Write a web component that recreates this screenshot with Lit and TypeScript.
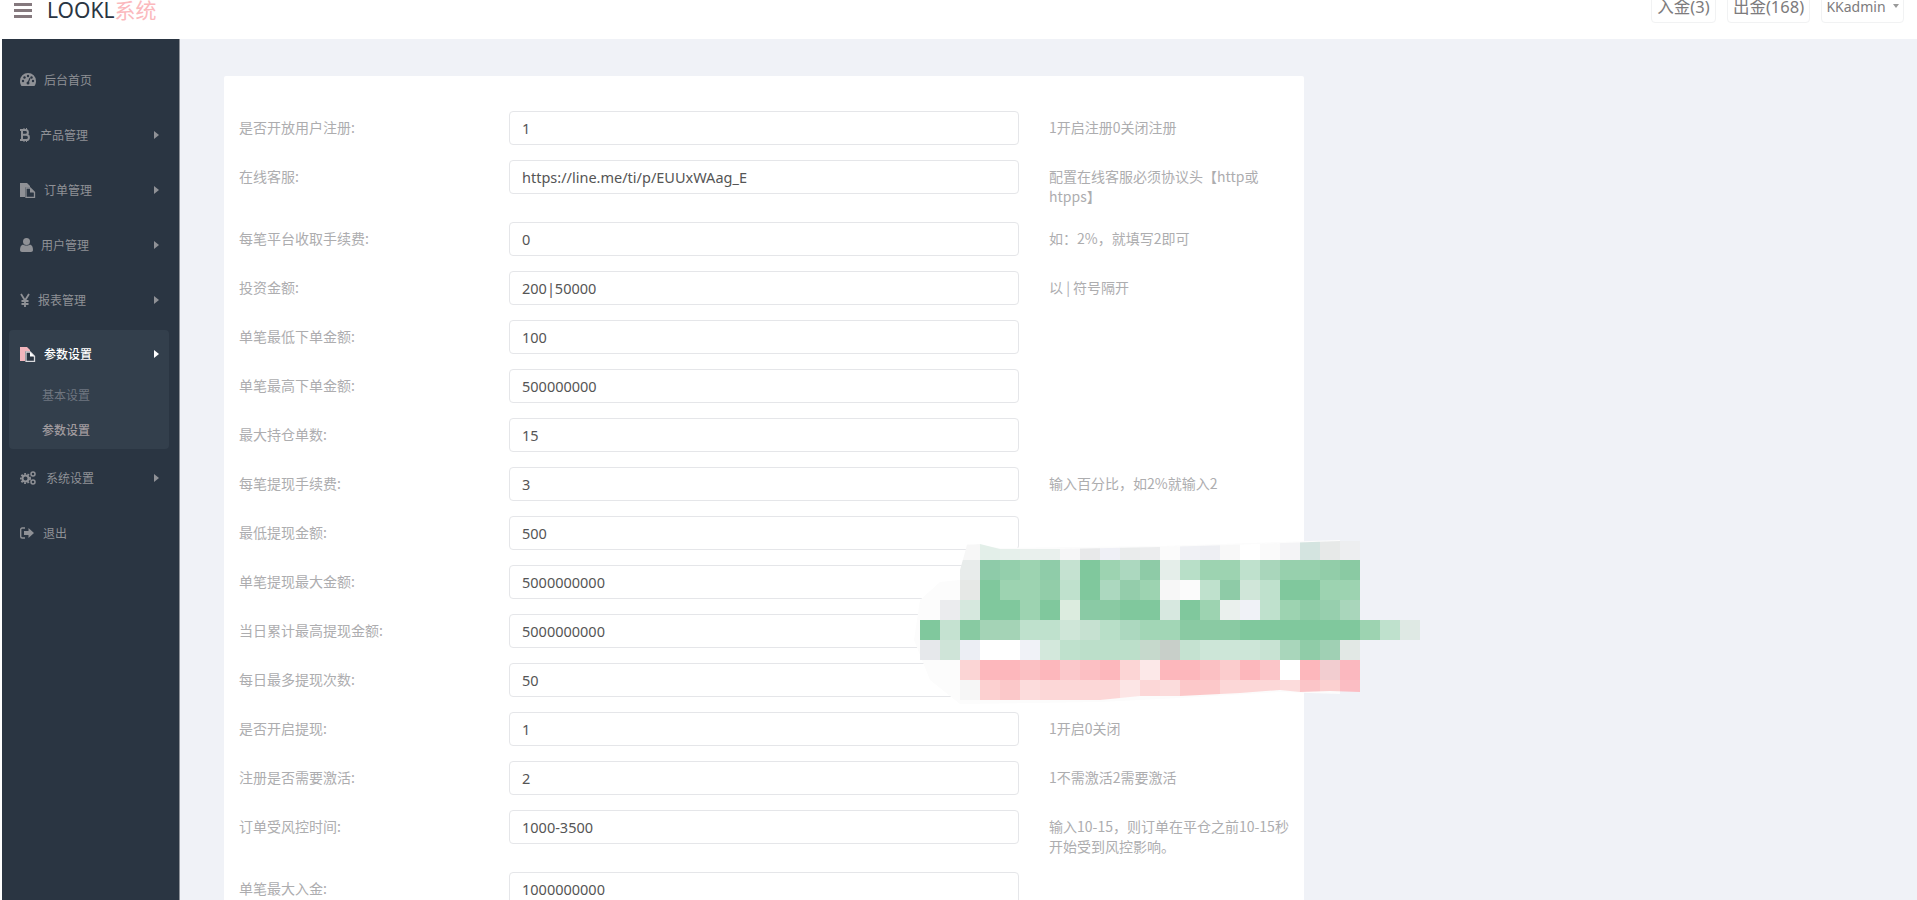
import { LitElement, html, css, svg } from 'lit';
import { customElement } from 'lit/decorators.js';

const icons: Record<string, any> = {
  gauge: svg`<svg width="16" height="13" viewBox="0 0 16 13"><path fill="currentColor" d="M8 0a8 8 0 0 0-8 8c0 1.900.6 3.600 1.500 5h13A8 8 0 0 0 16 8a8 8 0 0 0-8-8z"/><g fill="#2a3542"><circle cx="3" cy="8" r="1.200"/><circle cx="4.500" cy="4.500" r="1.200"/><circle cx="8" cy="3" r="1.200"/><circle cx="13" cy="8" r="1.200"/><circle cx="11.500" cy="4.500" r="1.200"/><circle cx="8" cy="10" r="1.500"/></g><path stroke="#2a3542" stroke-width="1.200" d="M8 10l2-5"/></svg>`,
  btc: svg`<svg width="10" height="14" viewBox="0 0 10 14"><path fill="none" stroke="currentColor" stroke-width="2" d="M0 2h5.500a2.300 2.300 0 0 1 0 4.800H2M2 6.800h4.300a2.400 2.400 0 0 1 0 5.200H0M2 1v12"/><path stroke="currentColor" d="M4 0v2M6.500 0v2M4 12v2M6.500 12v2"/></svg>`,
  files: svg`<svg width="16" height="16" viewBox="0 0 16 16"><path fill="currentColor" d="M0 1h7l3 3v11H0z"/><path fill="#2a3542" d="M5 5.500h5.500l4.500 4.500v6H5z"/><path fill="none" stroke="currentColor" stroke-width="1.300" d="M6 6h4.200l4.300 4.300V15.400H6z"/><path fill="currentColor" d="M10 6l4.500 4.500H10z"/></svg>`,
  filesOn: svg`<svg width="16" height="16" viewBox="0 0 16 16"><path fill="#f3b6bd" d="M0 1h7l3 3v11H0z"/><path fill="#2a3542" d="M5 5.500h5.500l4.500 4.500v6H5z"/><path fill="none" stroke="#d8d8dc" stroke-width="1.300" d="M6 6h4.200l4.300 4.300V15.400H6z"/><path fill="#fff" d="M10 6l4.500 4.500H10z"/></svg>`,
  user: svg`<svg width="13" height="14" viewBox="0 0 13 14"><circle fill="currentColor" cx="6.500" cy="3.500" r="3.500"/><path fill="currentColor" d="M3 6.500c1 1.300 6 1.300 7 0 2 .5 3 2.500 3 5.500 0 1.200-.8 2-2 2H2c-1.200 0-2-.8-2-2 0-3 1-5 3-5.500z"/></svg>`,
  yen: svg`<svg width="10" height="14" viewBox="0 0 10 14"><path fill="none" stroke="currentColor" stroke-width="1.800" d="M1 1l4 6.500L9 1M5 7v7M1.500 8h7M1.500 11h7"/></svg>`,
  cogs: svg`<svg width="16" height="14" viewBox="0 0 16 14"><circle fill="none" stroke="currentColor" stroke-width="2" cx="5.500" cy="7.500" r="3"/><circle fill="none" stroke="currentColor" stroke-width="1.800" stroke-dasharray="1.800 1.500" cx="5.500" cy="7.500" r="4.600"/><circle fill="none" stroke="currentColor" stroke-width="1.500" cx="13" cy="3" r="2"/><circle fill="none" stroke="currentColor" stroke-width="1.500" cx="13" cy="11" r="2"/></svg>`,
  out: svg`<svg width="14" height="12" viewBox="0 0 14 12"><path fill="none" stroke="currentColor" stroke-width="1.400" d="M5 1H2.200C1.300 1 .7 1.700.7 2.500v7c0 .8.6 1.500 1.500 1.500H5"/><path fill="currentColor" d="M4 4h4.500V1L14 6l-5.500 5V8H4z"/></svg>`,
};

// x is where the label starts, the icons have different widths
const navTop = [
  { label: '后台首页', icon: 'gauge', x: 44, arrow: false },
  { label: '产品管理', icon: 'btc', x: 40, arrow: true },
  { label: '订单管理', icon: 'files', x: 44, arrow: true },
  { label: '用户管理', icon: 'user', x: 41, arrow: true },
  { label: '报表管理', icon: 'yen', x: 38, arrow: true },
];
const navBottom = [
  { label: '系统设置', icon: 'cogs', x: 46, arrow: true },
  { label: '退出', icon: 'out', x: 43, arrow: false },
];

const rows = [
  { label: '是否开放用户注册:', value: '1', hint: '1开启注册0关闭注册' },
  { label: '在线客服:', value: 'https://line.me/ti/p/EUUxWAag_E', hint: '配置在线客服必须协议头【http或htpps】' },
  { label: '每笔平台收取手续费:', value: '0', hint: '如：2%，就填写2即可' },
  { label: '投资金额:', value: '200|50000', hint: '以 | 符号隔开' },
  { label: '单笔最低下单金额:', value: '100', hint: '' },
  { label: '单笔最高下单金额:', value: '500000000', hint: '' },
  { label: '最大持仓单数:', value: '15', hint: '' },
  { label: '每笔提现手续费:', value: '3', hint: '输入百分比，如2%就输入2' },
  { label: '最低提现金额:', value: '500', hint: '' },
  { label: '单笔提现最大金额:', value: '5000000000', hint: '' },
  { label: '当日累计最高提现金额:', value: '5000000000', hint: '' },
  { label: '每日最多提现次数:', value: '50', hint: '' },
  { label: '是否开启提现:', value: '1', hint: '1开启0关闭' },
  { label: '注册是否需要激活:', value: '2', hint: '1不需激活2需要激活' },
  { label: '订单受风控时间:', value: '1000-3500', hint: '输入10-15，则订单在平仓之前10-15秒开始受到风控影响。' },
  { label: '单笔最大入金:', value: '1000000000', hint: '' },
];

// the blurred block over the form, one row per 20px, null = nothing drawn
const _ = null;
const mosaic: (string | null)[][] = [
  [_, _, '#f7f7f7', '#e3efe9', '#e6f0eb', '#e9f0ed', '#e9f0ed', '#f6f6f7', '#e8e9ea', '#eff0f6', '#eaecec', '#ecedee', '#fbfbfb', '#f0f1f5', '#eeeff3', '#f8f8f8', '#ffffff', '#fafafa', '#f4f4f6', '#d4e4e0', '#e7e9e8', '#edeef0'],
  [_, _, '#e8eceb', '#8ecba9', '#94cfac', '#9dd3b1', '#8fcca9', '#c5e2d1', '#80c89d', '#9dd3b1', '#acd8bf', '#8ecba7', '#e5eeea', '#b8dfc8', '#9dd3b1', '#9dd3b1', '#bfe1cd', '#a9d6bb', '#97d0ad', '#97d0ad', '#92cda9', '#8acaa3'],
  [_, _, '#e6e8e6', '#80c89d', '#9dd3b1', '#9dd3b1', '#92cda9', '#bfe1cd', '#80c89d', '#acd8bf', '#94cdab', '#9dd3b1', '#f7f7f7', '#fbfbfb', '#bfe1cd', '#8ecba7', '#d0e6d9', '#bfe1cd', '#80c89d', '#80c89d', '#9dd3b1', '#9dd3b1'],
  [_, '#ebecee', '#d6e8de', '#80c89d', '#80c89d', '#9dd3b1', '#80c89d', '#dcecdf', '#8acaa5', '#8acaa3', '#80c89d', '#80c89d', '#d7e8e0', '#80c89d', '#9dd3b1', '#eaf0ed', '#f0f2f7', '#bfe1cd', '#9dd3b1', '#90cca8', '#97cfae', '#a9d6bb'],
  ['#80c89d', '#c5e2d1', '#88caa2', '#a4d3b6', '#a4d3b6', '#bfe1cd', '#bfe1cd', '#cfe6d8', '#c6e1d1', '#b8dfc8', '#acd8bf', '#a2d6b6', '#a2d6b6', '#8acaa3', '#8acaa3', '#8acaa3', '#80c89d', '#80c89d', '#80c89d', '#80c89d', '#80c89d', '#80c89d', '#9dd3b1', '#bfe1cd', '#dfe9e4'],
  ['#e6e8eb', '#cfe4d8', '#eceef4', '#ffffff', '#ffffff', '#f0f2f7', '#d3e8dc', '#bfe1cd', '#bcdfca', '#bcdfca', '#bcdfca', '#c6d9cc', '#c8cfc9', '#c5e2d1', '#cde6d8', '#cde6d8', '#cde6d8', '#c8e3d3', '#a9d6bb', '#90cca8', '#a0d0b4', '#e2e8e5'],
  [_, _, '#fbd5d5', '#fdb7bc', '#fdb7bc', '#fbc0c3', '#fdb7bc', '#fbc8cb', '#fcbfc3', '#fdb7bc', '#fcd5d5', '#fce8e8', '#fdb7bc', '#fdb7bc', '#fbc0c3', '#fbcccd', '#fdb7bc', '#fbc5c8', '#ffffff', '#fdb7bc', '#f2cdd0', '#fbb8bf'],
  [_, _, '#f6f6f6', '#fcd0d0', '#fbc8c9', '#fcdcdc', '#fcd7d7', '#fcd7d7', '#fcd7d7', '#fcd7d7', '#fce5e5', '#fcd7d7', '#fbdcdc', '#fcc8c9', '#fcc8c9', '#fcd7d7', '#fcd7d7', '#fcd7d7', '#fcdcdc', '#fbc5c8', '#fbd0d0', '#fbbdc3'],
];

@customElement('app-root')
export class AppRoot extends LitElement {
  static styles = css`
    :host {
      display: block;
      height: 100vh;
      overflow: hidden;
      position: relative;
      background: #fff;
      font-family: 'Noto Sans CJK SC', 'Noto Sans', sans-serif;
      font-size: 14px;
    }

    .topbar {
      height: 39px;
      overflow: hidden;
    }
    .topbar-inner {
      height: 34px;
      margin-top: -11px;
      padding: 0 13px 0 14px;
      display: flex;
      align-items: center;
      justify-content: space-between;
    }
    .brand {
      display: flex;
      align-items: center;
      margin-top: 8px;
    }
    .burger {
      width: 18px;
      display: flex;
      flex-direction: column;
      gap: 3px;
      margin-right: 15px;
    }
    .burger i {
      display: block;
      height: 3px;
      background: #85797e;
    }
    .title {
      font-family: 'Noto Sans', 'Noto Sans CJK SC', sans-serif;
      font-size: 21px;
      line-height: 28px;
      color: #2a3542;
    }
    .title span {
      color: #fbb9bd;
    }
    .actions {
      display: flex;
      gap: 11px;
    }
    .btn {
      height: 34px;
      box-sizing: border-box;
      border: 1px solid #f1f2f3;
      border-radius: 4px;
      display: flex;
      align-items: center;
      justify-content: center;
      font-family: 'Noto Sans', 'Noto Sans CJK SC', sans-serif;
      font-size: 16.500px;
      color: #7d7b7d;
    }
    .btn.in { width: 65px; }
    .btn.out { width: 83px; }
    .btn.user { width: 83px; font-size: 14px; gap: 7px; }
    .caret {
      width: 0;
      height: 0;
      border-left: 3.500px solid transparent;
      border-right: 3.500px solid transparent;
      border-top: 4px solid #9a9a9a;
    }

    .body {
      display: flex;
      height: 861px;
    }

    .side {
      width: 178px;
      margin-left: 2px;
      padding-top: 13px;
      box-sizing: border-box;
      background: #2a3542;
      border-right: 1px solid #8e9299;
      color: #8f9196;
      font-size: 12px;
      flex: none;
    }
    .item {
      height: 55px;
      padding: 0 20px 0 18px;
      display: flex;
      align-items: center;
    }
    .ico {
      flex: none;
      display: flex;
      align-items: center;
    }
    .ico svg { display: block; }
    .arrow {
      margin-left: auto;
      width: 0;
      height: 0;
      border-top: 4px solid transparent;
      border-bottom: 4px solid transparent;
      border-left: 5px solid #8f9196;
    }
    .group {
      margin: 3px 10px 1px 7px;
      background: #333f4c;
      border-radius: 4px;
      height: 119px;
    }
    .group .item {
      height: 47px;
      padding: 0 10px 0 11px;
      color: #fff;
      font-weight: 500;
    }
    .group .arrow { border-left-color: #fff; }
    .sub {
      height: 35px;
      padding-left: 33px;
      display: flex;
      align-items: center;
      color: #6f7680;
    }
    .sub.on {
      color: #a09a9e;
      font-weight: 500;
    }

    .main {
      flex: 1;
      background: #f0f2f7;
      padding: 37px 0 0 44px;
    }
    .card {
      width: 1080px;
      box-sizing: border-box;
      background: #fff;
      border-radius: 2px;
      padding: 35px 0 0 15px;
      display: flex;
      flex-direction: column;
      gap: 15px;
    }
    .row {
      display: grid;
      grid-template-columns: 270px 510px 1fr;
      align-items: start;
    }
    .label, .hint {
      padding: 6px 0 1px;
      line-height: 20px;
      color: #adadaf;
    }
    .hint {
      padding-left: 30px;
      padding-right: 10px;
    }
    input {
      width: 100%;
      height: 34px;
      box-sizing: border-box;
      border: 1px solid #e5e6e9;
      border-radius: 4px;
      padding: 0 12px;
      font-family: 'Noto Sans', sans-serif;
      font-size: 14.500px;
      color: #555;
      background: #fff;
      outline: none;
    }

    .blur {
      position: absolute;
      left: 900px;
      top: 520px;
      display: block;
    }
  `;

  navItem(n: { label: string; icon: string; x: number; arrow: boolean }) {
    return html`
      <div class="item">
        <span class="ico" style="width:${n.x - 20}px">${icons[n.icon]}</span>
        <span>${n.label}</span>
        ${n.arrow ? html`<span class="arrow"></span>` : ''}
      </div>
    `;
  }

  renderBlur() {
    const clip = '67,25 80,24 100,29 160,29 260,27 330,25 440,21 460,21 460,100 520,100 520,120 460,120 460,172 430,171 400,172 380,170 340,173 280,176 240,176 200,180 60,180 60,140 20,140 20,100 40,80 60,80 60,50';
    const brush = '67,24 100,28 260,26 440,20 440,174 380,172 280,178 200,182 60,184 30,160 14,120 20,80 40,62 60,60';
    return html`
      <svg class="blur" width="540" height="200" viewBox="0 0 540 200">
        <defs><clipPath id="blot"><polygon points=${clip}></polygon></clipPath></defs>
        <polygon points=${brush} fill="#fcfcfc"></polygon>
        <g clip-path="url(#blot)">
          ${mosaic.map((line, r) => line.map((c, i) =>
            c ? svg`<rect x=${20 + i * 20} y=${20 + r * 20} width="20" height="20" fill=${c}></rect>` : ''))}
        </g>
      </svg>
    `;
  }

  render() {
    return html`
      <div class="topbar">
        <div class="topbar-inner">
          <div class="brand">
            <div class="burger"><i></i><i></i><i></i></div>
            <div class="title">LOOKL<span>系统</span></div>
          </div>
          <div class="actions">
            <div class="btn in">入金(3)</div>
            <div class="btn out">出金(168)</div>
            <div class="btn user">KKadmin<span class="caret"></span></div>
          </div>
        </div>
      </div>
      <div class="body">
        <div class="side">
          ${navTop.map((n) => this.navItem(n))}
          <div class="group">
            <div class="item">
              <span class="ico" style="width:24px">${icons.filesOn}</span>
              <span>参数设置</span>
              <span class="arrow"></span>
            </div>
            <div class="sub">基本设置</div>
            <div class="sub on">参数设置</div>
          </div>
          ${navBottom.map((n) => this.navItem(n))}
        </div>
        <div class="main">
          <div class="card">
            ${rows.map((r) => html`
              <div class="row">
                <div class="label">${r.label}</div>
                <input .value=${r.value} />
                <div class="hint">${r.hint}</div>
              </div>
            `)}
          </div>
        </div>
      </div>
      ${this.renderBlur()}
    `;
  }
}
